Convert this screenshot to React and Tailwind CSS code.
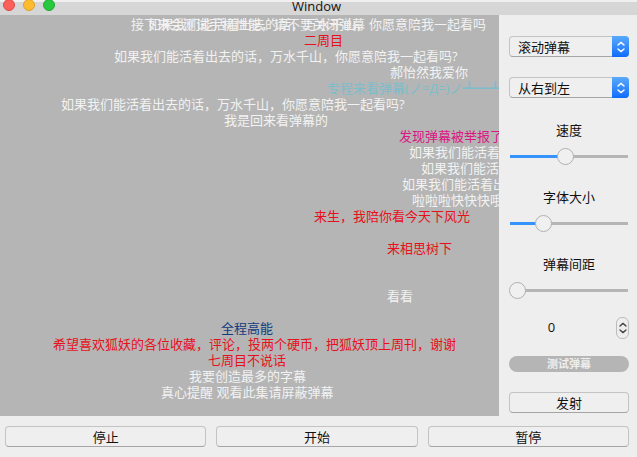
import { useState } from "react";

const LYRIC = "如果我们能活着出去的话，万水千山，你愿意陪我一起看吗";

// Danmaku on the canvas: lane number, x of the first glyph, colour.
const DANMAKU = [
  { lane: 0, x: 131, text: "接下来会测试手机性能，请不要关闭弹幕" },
  { lane: 0, x: 148, text: LYRIC },
  { lane: 1, x: 304, text: "二周目", color: "text-[#e8101c]" },
  { lane: 2, x: 114, text: LYRIC + "?" },
  { lane: 3, x: 390, text: "郝怡然我爱你" },
  { lane: 4, x: 327, text: "专程来看弹幕(ノ=Д=)ノ┻━┻", color: "text-[#7cbdcb]" },
  { lane: 5, x: 61, text: LYRIC + "?" },
  { lane: 6, x: 224, text: "我是回来看弹幕的" },
  { lane: 7, x: 399, text: "发现弹幕被举报了", color: "text-[#dc1583]" },
  { lane: 8, x: 409, text: "如果我们能活着" },
  { lane: 9, x: 421, text: "如果我们能活" },
  { lane: 10, x: 402, text: "如果我们能活着出" },
  { lane: 11, x: 412, text: "啦啦啦快快快哦" },
  { lane: 12, x: 314, text: "来生，我陪你看今天下风光", color: "text-[#e8101c]" },
  { lane: 14, x: 387, text: "来相思树下", color: "text-[#e8101c]" },
  { lane: 17, x: 387, text: "看看" },
  { lane: 19, x: 221, text: "全程高能", color: "text-[#123c7e]" },
  { lane: 20, x: 53, text: "希望喜欢狐妖的各位收藏，评论，投两个硬币，把狐妖顶上周刊，谢谢", color: "text-[#e8101c]" },
  { lane: 21, x: 208, text: "七周目不说话", color: "text-[#e8101c]" },
  { lane: 22, x: 189, text: "我要创造最多的字幕" },
  { lane: 23, x: 161, text: "真心提醒 观看此集请屏蔽弹幕" },
];

const LANE_HEIGHT = 16;

function Chevrons({ className, strokeWidth }) {
  return (
    <svg viewBox="0 0 10 14" className={className} fill="none" stroke="currentColor" strokeWidth={strokeWidth} strokeLinecap="round" strokeLinejoin="round" aria-hidden="true">
      <path d="M2 5 L5 2.4 L8 5 M2 9 L5 11.6 L8 9" />
    </svg>
  );
}

function PopUp({ label, options }) {
  return (
    <div className="relative h-[21px]">
      <select
        aria-label={label}
        className="block h-full w-full appearance-none rounded-[4px] border border-[#c3c3c3] border-b-[#a5a5a5] bg-[#efefef] pr-5 pl-2 leading-4 outline-none"
      >
        {options.map((option) => (
          <option key={option}>{option}</option>
        ))}
      </select>
      <span className="pointer-events-none absolute inset-y-0 right-0 flex w-[17px] items-center justify-center rounded-r-[4px] bg-linear-to-b from-[#5aa9fb] to-[#0a6cfb] text-white">
        <Chevrons className="h-[14px] w-[10px]" strokeWidth={1.4} />
      </span>
    </div>
  );
}

function Slider({ id, label, initial }) {
  const [value, setValue] = useState(initial);
  return (
    <div className="mt-[23px] flex flex-col gap-2">
      <label htmlFor={id} className="text-center leading-[18px]">
        {label}
      </label>
      <input
        id={id}
        type="range"
        min="0"
        max="100"
        value={value}
        onChange={(e) => setValue(Number(e.target.value))}
        style={{ "--fill": `${value}%` }}
        className="block h-[18px] w-full appearance-none bg-transparent bg-[linear-gradient(to_right,#3693fb_var(--fill),#b5b5b5_var(--fill))] bg-[length:118px_3px] bg-center bg-no-repeat outline-none [&::-webkit-slider-thumb]:size-[17px] [&::-webkit-slider-thumb]:appearance-none [&::-webkit-slider-thumb]:rounded-full [&::-webkit-slider-thumb]:border [&::-webkit-slider-thumb]:border-[#b0b0b0] [&::-webkit-slider-thumb]:bg-[#f0f0f0]"
      />
    </div>
  );
}

function PushButton({ children, className = "" }) {
  return (
    <button
      type="button"
      className={`h-[21px] rounded-[4px] border border-[#c3c3c3] border-b-[#a5a5a5] bg-[#efefef] leading-4 ${className}`}
    >
      {children}
    </button>
  );
}

export default function App() {
  const [count, setCount] = useState(0);
  return (
    <div
      lang="zh-CN"
      className="flex min-h-screen flex-col bg-[#eeeeee] [font-family:'Open_Sans','Noto_Sans_CJK_SC',sans-serif] text-[13px] text-[#111111]"
    >
      <header className="relative flex h-[15px] items-start justify-center bg-[linear-gradient(#efefef_2px,#d6d6d6_2px)]">
        <div className="absolute -top-px left-[3px] flex gap-2">
          <span className="size-3 rounded-full border border-[#dd4a42] bg-[#fc605b]" />
          <span className="size-3 rounded-full border border-[#dda02c] bg-[#fdbc2f]" />
          <span className="size-3 rounded-full border border-[#1faa30] bg-[#28c940]" />
        </div>
        <h1 className="pr-1 leading-3">Window</h1>
      </header>

      <main className="flex grow">
        <section className="relative grow overflow-hidden bg-[#b5b5b5] text-[#f2f2f2]">
          {DANMAKU.map(({ lane, x, text, color }) => (
            <p
              key={`${lane}-${x}`}
              className={`absolute leading-4 whitespace-nowrap ${color ?? ""}`}
              style={{ left: x, top: lane * LANE_HEIGHT + 1 }}
            >
              {text}
            </p>
          ))}
        </section>

        <aside className="flex w-[138px] shrink-0 flex-col pt-[21px] pr-2 pb-[3px] pl-[10px]">
          <div className="flex flex-col gap-5">
            <PopUp label="弹幕类型" options={["滚动弹幕", "浮动弹幕"]} />
            <PopUp label="方向" options={["从右到左", "从左到右"]} />
          </div>
          <Slider id="speed" label="速度" initial={47} />
          <Slider id="font-size" label="字体大小" initial={25} />
          <Slider id="spacing" label="弹幕间距" initial={0} />
          <div className="mt-[18px] flex h-[22px] items-center">
            <input
              aria-label="数量"
              type="text"
              inputMode="numeric"
              value={count}
              onChange={(e) => setCount(Number(e.target.value) || 0)}
              className="mr-[22px] w-0 min-w-0 grow bg-transparent text-center outline-none"
            />
            <div className="relative h-[22px] w-[13px] text-[#444444]">
              <div className="flex h-full flex-col overflow-hidden rounded-[6px] border border-[#bcbcbc]">
                <button type="button" aria-label="+" className="grow" onClick={() => setCount(count + 1)} />
                <button type="button" aria-label="-" className="grow" onClick={() => setCount(count - 1)} />
              </div>
              <span className="pointer-events-none absolute inset-0 flex items-center justify-center">
                <Chevrons className="h-[14px] w-[10px]" strokeWidth={1.4} />
              </span>
            </div>
          </div>
          <button type="button" className="mt-[17px] h-4 rounded-full bg-[#b5b5b5] text-[11px] leading-4 font-bold text-[#eeeeee]">
            测试弹幕
          </button>
          <PushButton className="mt-5">发射</PushButton>
        </aside>
      </main>

      <footer className="grid grid-cols-3 gap-[10px] pt-[10px] pr-2 pb-[10px] pl-[5px]">
        <PushButton>停止</PushButton>
        <PushButton>开始</PushButton>
        <PushButton>暂停</PushButton>
      </footer>
    </div>
  );
}
